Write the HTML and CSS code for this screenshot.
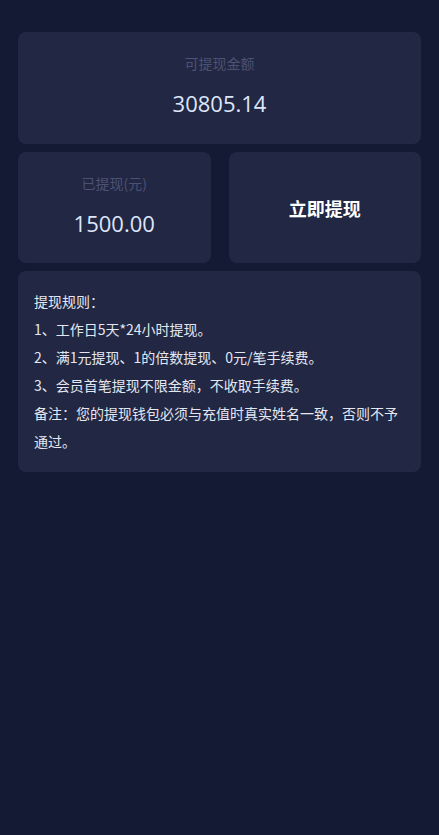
FILE: index.html
```html
<!DOCTYPE html>
<html lang="zh-CN">
<head>
<meta charset="utf-8">
<meta name="viewport" content="width=device-width, initial-scale=1">
<title>提现</title>
<link rel="stylesheet" href="styles.css">
</head>
<body>
<main class="page">
  <section class="card balance">
    <div class="label">可提现金额</div>
    <div class="amount">30805.14</div>
  </section>
  <div class="row">
    <section class="card balance small">
      <div class="label">已提现(元)</div>
      <div class="amount">1500.00</div>
    </section>
    <button class="card action" type="button">立即提现</button>
  </div>
  <section class="card rules">
    <p>提现规则：</p>
    <p>1、工作日5天*24小时提现。</p>
    <p>2、满1元提现、1的倍数提现、0元/笔手续费。</p>
    <p>3、会员首笔提现不限金额，不收取手续费。</p>
    <p>备注：您的提现钱包必须与充值时真实姓名一致，否则不予通过。</p>
  </section>
</main>
</body>
</html>
```
FILE: styles.css
```css
html, body {
  margin: 0;
  padding: 0;
  background: #151a34;
  min-height: 100%;
}
body {
  font-family: "Noto Sans CJK SC", "Noto Sans", sans-serif;
  color: #e6e9f5;
}
.page {
  padding: 32px 18px 0;
  display: flex;
  flex-direction: column;
  gap: 8px;
}
.card {
  background: #222743;
  border-radius: 8px;
  border: none;
  box-sizing: border-box;
}
.balance {
  height: 112px;
  display: flex;
  flex-direction: column;
  align-items: center;
  padding-top: 20px;
}
.label {
  font-size: 14px;
  line-height: 22px;
  color: #4c5273;
}
.amount {
  margin-top: 14px;
  font-family: "Open Sans", "Noto Sans", sans-serif;
  font-size: 22px;
  line-height: 30px;
  color: #dde6fb;
}
.row {
  display: grid;
  grid-template-columns: 1fr 1fr;
  gap: 18px;
}
.small {
  height: 111px;
}
.action {
  height: 111px;
  font-family: "Noto Sans CJK SC", sans-serif;
  font-size: 18px;
  font-weight: 700;
  color: #ffffff;
  cursor: pointer;
  padding: 0;
}
.rules {
  padding: 16px 16px 17px;
}
.rules p {
  margin: 0;
  font-size: 14px;
  line-height: 28px;
  color: #e4e7f2;
}
```
